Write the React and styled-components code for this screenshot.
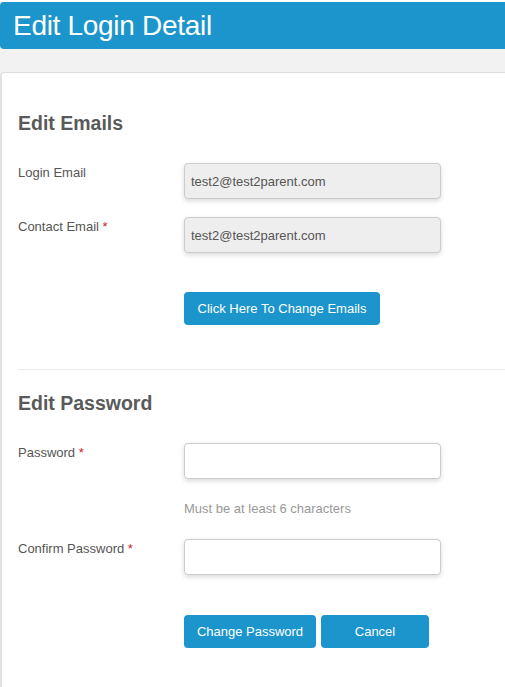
import React from "react";
import styled, { createGlobalStyle } from "styled-components";

const GlobalStyle = createGlobalStyle`
  html, body {
    margin: 0;
    padding: 0;
    background: #ffffff;
    font-family: "Liberation Sans", Arial, sans-serif;
    overflow: hidden;
  }
`;

const Page = styled.div`
  width: 505px;
  height: 687px;
  box-sizing: border-box;
  overflow: hidden;
  background: #f2f2f2;
  border-top: 2px solid #ffffff;
`;

const Header = styled.header`
  height: 47px;
  width: 520px;
  display: flex;
  align-items: center;
  padding-left: 13px;
  box-sizing: border-box;
  background: #1b95cb;
  border-radius: 4px 0 0 4px;

  h1 {
    margin: 0;
    font-weight: normal;
    font-size: 28px;
    color: #ffffff;
    letter-spacing: -0.3px;
  }
`;

const Card = styled.main`
  margin-top: 23px;
  width: 530px;
  height: 640px;
  background: #ffffff;
  border-top: 1px solid #dddddd;
  border-left: 2px solid #e2e2e2;
  border-radius: 4px 0 0 0;
  box-sizing: border-box;
  padding-top: 38px;
`;

const Section = styled.section`
  padding-left: 16px;
  padding-bottom: ${(p) => p.bottom || 0}px;
`;

const Heading = styled.h2`
  margin: 0 0 28px 0;
  font-size: 19.5px;
  line-height: 24px;
  font-weight: bold;
  color: #5a5a5a;
`;

const Row = styled.div`
  display: grid;
  grid-template-columns: 166px 257px;
  align-items: start;
  margin-bottom: ${(p) => p.gap}px;
`;

const Label = styled.label`
  font-size: 13px;
  line-height: 20px;
  color: #555555;

  span {
    color: #d0202e;
  }
`;

const Input = styled.input`
  width: 257px;
  height: 36px;
  box-sizing: border-box;
  padding: 0 6px;
  font-family: "Liberation Sans", Arial, sans-serif;
  font-size: 13px;
  color: #555555;
  background: ${(p) => (p.readOnly ? "#eeeeee" : "#ffffff")};
  border: 1px solid #cccccc;
  border-radius: 4px;
  box-shadow: 0 2px 5px rgba(0, 0, 0, 0.15);
  outline: none;
`;

const Hint = styled.div`
  font-size: 13px;
  line-height: 20px;
  color: #999999;
`;

const Actions = styled.div`
  display: flex;
  gap: 5px;
`;

const Button = styled.button`
  height: 33px;
  width: ${(p) => p.w}px;
  padding: 0;
  border: none;
  border-radius: 4px;
  background: #1b95cb;
  color: #ffffff;
  font-family: "Liberation Sans", Arial, sans-serif;
  font-size: 13px;
  cursor: pointer;
`;

const Divider = styled.hr`
  margin: 0 0 21px 16px;
  border: none;
  border-top: 1px solid #ececec;
`;

const Required = () => <span>*</span>;

export default function App() {
  return (
    <>
      <GlobalStyle />
      <Page>
        <Header>
          <h1>Edit Login Detail</h1>
        </Header>
        <Card>
          <Section bottom={44}>
            <Heading>Edit Emails</Heading>
            <Row gap={18}>
              <Label>Login Email</Label>
              <Input readOnly value="test2@test2parent.com" />
            </Row>
            <Row gap={39}>
              <Label>
                Contact Email <Required />
              </Label>
              <Input readOnly value="test2@test2parent.com" />
            </Row>
            <Row gap={0}>
              <div />
              <Actions>
                <Button w={196}>Click Here To Change Emails</Button>
              </Actions>
            </Row>
          </Section>
          <Divider />
          <Section>
            <Heading>Edit Password</Heading>
            <Row gap={20}>
              <Label>
                Password <Required />
              </Label>
              <Input type="password" />
            </Row>
            <Row gap={20}>
              <div />
              <Hint>Must be at least 6 characters</Hint>
            </Row>
            <Row gap={40}>
              <Label>
                Confirm Password <Required />
              </Label>
              <Input type="password" />
            </Row>
            <Row gap={0}>
              <div />
              <Actions>
                <Button w={132}>Change Password</Button>
                <Button w={108}>Cancel</Button>
              </Actions>
            </Row>
          </Section>
        </Card>
      </Page>
    </>
  );
}
